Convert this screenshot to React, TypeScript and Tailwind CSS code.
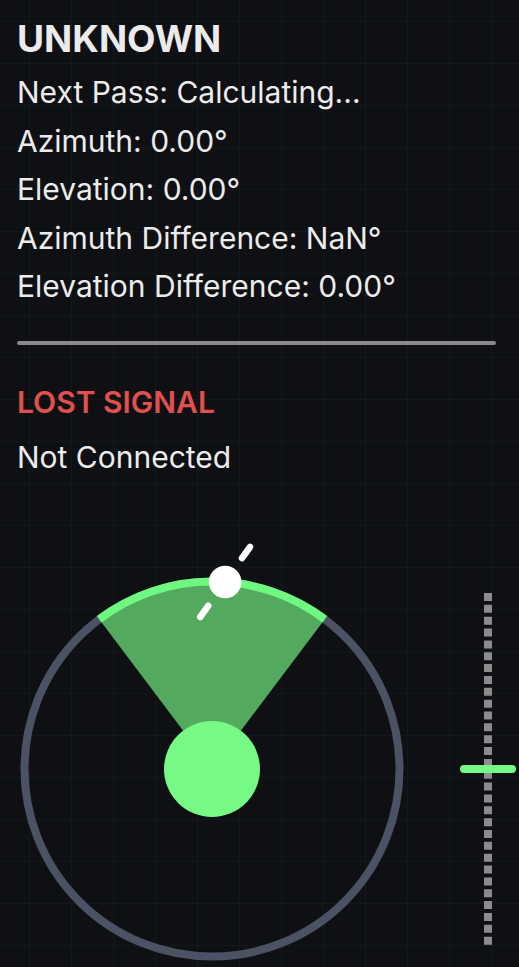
import React from 'react';

const info = [
  'Next Pass: Calculating...',
  'Azimuth: 0.00°',
  'Elevation: 0.00°',
  'Azimuth Difference: NaN°',
  'Elevation Difference: 0.00°',
];

const Radar: React.FC = () => {
  // center 195,195 — ring radius 187.5, beam ±37°
  return (
    <svg width={390} height={390} viewBox="0 0 390 390" className="overflow-visible shrink-0">
      <circle cx={195} cy={195} r={187.5} fill="none" stroke="#4b5263" strokeWidth={8} />
      <path d="M195 195 L82.2 45.3 A187.5 187.5 0 0 1 307.8 45.3 Z" fill="#53aa5f" />
      <path d="M82.2 45.3 A187.5 187.5 0 0 1 307.8 45.3" fill="none" stroke="#6ef87f" strokeWidth={8} />
      <circle cx={195} cy={195} r={48} fill="#77fa85" />
      {/* satellite */}
      <line x1={225} y1={-15.8} x2={233} y2={-27} stroke="#fff" strokeWidth={6.5} strokeLinecap="round" />
      <line x1={191.2} y1={31.8} x2={183.2} y2={43} stroke="#fff" strokeWidth={6.5} strokeLinecap="round" />
      <circle cx={208.1} cy={8} r={16.3} fill="#fff" />
    </svg>
  );
};

const ElevationBar: React.FC = () => (
  <svg width={56} height={352} viewBox="0 0 56 352" className="shrink-0">
    <line x1={28} y1={0} x2={28} y2={352} stroke="#8c8c8c" strokeWidth={8} strokeDasharray="8 3.85" />
    <rect x={0} y={172} width={56} height={8} rx={4} fill="#77fa85" />
  </svg>
);

export default function App() {
  return (
    <div className="min-h-screen w-full overflow-hidden bg-[#0f1013] bg-[linear-gradient(to_right,#13191a_1.5px,transparent_1.5px),linear-gradient(to_bottom,#13191a_1.5px,transparent_1.5px)] bg-[size:42px_42px] bg-[position:29px_21px] px-[17px] pt-[16px] font-['Inter',sans-serif] text-[#ececec]">
      <h1 className="text-[37px] font-bold leading-[46px] text-[#ebebeb]">UNKNOWN</h1>
      <div className="mt-[6px] flex flex-col text-[30px] leading-[48.5px]">
        {info.map((t) => (
          <p key={t}>{t}</p>
        ))}
      </div>
      <div className="mt-[30px] h-[4px] w-[479px] rounded-full bg-[#8a8a8a]" />
      <p className="mt-[33px] text-[30px] font-semibold leading-[48.5px] text-[#e0504d]">LOST SIGNAL</p>
      <p className="mt-[7px] text-[30px] leading-[48.5px]">Not Connected</p>
      <div className="mt-[92px] flex items-center gap-[53px]">
        <Radar />
        <ElevationBar />
      </div>
    </div>
  );
}
